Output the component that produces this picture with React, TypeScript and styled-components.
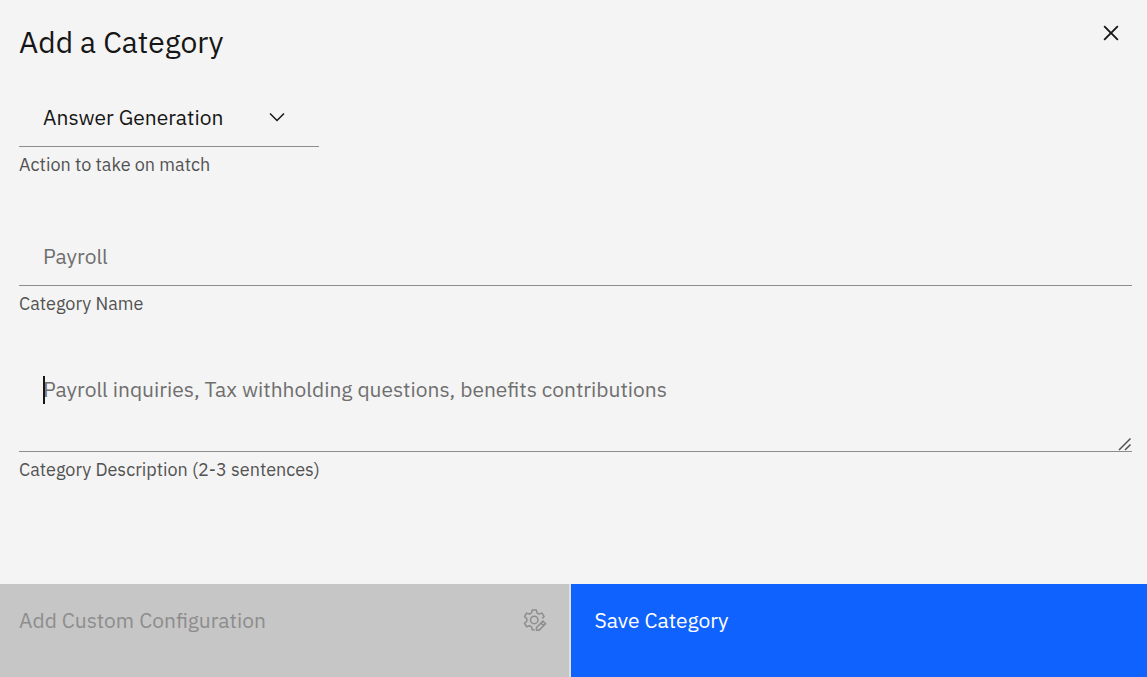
import React, { useState } from "react";
import styled, { createGlobalStyle, css } from "styled-components";

const GlobalStyle = createGlobalStyle`
  *, *::before, *::after { box-sizing: border-box; }
  body {
    margin: 0;
    background: #f4f4f4;
    color: #161616;
    font-family: "IBM Plex Sans", Roboto, "Liberation Sans", sans-serif;
  }
  button, input, select, textarea { font: inherit; color: inherit; }
`;

const Modal = styled.main`
  display: flex;
  flex-direction: column;
  min-height: 100vh;
`;

const Header = styled.header`
  display: flex;
  justify-content: space-between;
  align-items: flex-start;
  padding: 0 0 0 19px;
`;

const Title = styled.h1`
  margin: 21px 0 0;
  font-size: 30px;
  line-height: 42px;
  font-weight: 400;
`;

const CloseButton = styled.button`
  display: flex;
  align-items: center;
  justify-content: center;
  width: 72px;
  height: 66px;
  padding: 0;
  border: 0;
  background: transparent;
  cursor: pointer;
`;

const Form = styled.form`
  flex: 1;
  display: flex;
  flex-direction: column;
  gap: 43px;
  padding: 21px 15px 24px 19px;
`;

const Field = styled.div<{ $compact?: boolean }>`
  display: flex;
  flex-direction: column;
  gap: 6px;
  width: ${(p) => (p.$compact ? "300px" : "100%")};
  padding-bottom: ${(p) => (p.$compact ? "6px" : "0")};
`;

const Control = styled.div`
  position: relative;
  display: flex;
`;

const controlStyle = css`
  width: 100%;
  border: 0;
  border-bottom: 1px solid #8d8d8d;
  border-radius: 0;
  outline: 0;
  background: transparent;
  font-size: 21px;
  line-height: 28px;
  &::placeholder { color: #6f6f6f; opacity: 1; }
`;

const Select = styled.select`
  ${controlStyle}
  appearance: none;
  height: 60px;
  padding: 0 72px 0 24px;
`;

const Input = styled.input`
  ${controlStyle}
  height: 60px;
  padding: 0 24px;
`;

const TextArea = styled.textarea`
  ${controlStyle}
  display: block;
  height: 93px;
  padding: 16px 24px;
  resize: none;
`;

const Chevron = styled.svg`
  position: absolute;
  top: 18px;
  right: 30px;
  pointer-events: none;
`;

const Grip = styled.svg`
  position: absolute;
  right: 0;
  bottom: 1px;
  pointer-events: none;
`;

const Caret = styled.span`
  position: absolute;
  top: 17px;
  left: 24px;
  width: 2px;
  height: 28px;
  background: #161616;
  pointer-events: none;
`;

const Label = styled.label`
  color: #525252;
  font-size: 18px;
  line-height: 24px;
`;

const Footer = styled.footer`
  display: grid;
  grid-template-columns: calc(50% - 3px) 1fr;
`;

const FooterButton = styled.button<{ $primary?: boolean }>`
  display: flex;
  justify-content: space-between;
  align-items: center;
  padding: 22px 22px 43px ${(p) => (p.$primary ? 24 : 19)}px;
  border: 0;
  border-right: ${(p) => (p.$primary ? "0" : "2px solid #e0e0e0")};
  background: ${(p) => (p.$primary ? "#0f62fe" : "#c6c6c6")};
  color: ${(p) => (p.$primary ? "#ffffff" : "#8d8d8d")};
  font-size: 21px;
  line-height: 28px;
  text-align: left;
  cursor: ${(p) => (p.$primary ? "pointer" : "not-allowed")};
`;

export default function App() {
  const [description, setDescription] = useState("");
  const [focused, setFocused] = useState(false);

  return (
    <>
      <GlobalStyle />
      <Modal>
        <Header>
          <Title>Add a Category</Title>
          <CloseButton type="button" aria-label="Close">
            <svg width="30" height="30" viewBox="0 0 32 32" fill="#161616" aria-hidden="true">
              <path d="M24 9.4L22.6 8 16 14.6 9.4 8 8 9.4 14.6 16 8 22.6 9.4 24 16 17.4 22.6 24 24 22.6 17.4 16 24 9.4z" />
            </svg>
          </CloseButton>
        </Header>

        <Form id="category-form" onSubmit={(e) => e.preventDefault()}>
          <Field $compact>
            <Control>
              <Select id="action" defaultValue="answer">
                <option value="answer">Answer Generation</option>
              </Select>
              <Chevron width="24" height="24" viewBox="0 0 16 16" fill="#161616" aria-hidden="true">
                <path d="M8 11L3 6 3.7 5.3 8 9.6 12.3 5.3 13 6z" />
              </Chevron>
            </Control>
            <Label htmlFor="action">Action to take on match</Label>
          </Field>

          <Field>
            <Control>
              <Input id="name" type="text" placeholder="Payroll" />
            </Control>
            <Label htmlFor="name">Category Name</Label>
          </Field>

          <Field>
            <Control>
              <TextArea
                id="description"
                placeholder="Payroll inquiries, Tax withholding questions, benefits contributions"
                value={description}
                onChange={(e) => setDescription(e.target.value)}
                onFocus={() => setFocused(true)}
                onBlur={() => setFocused(false)}
              />
              {!focused && !description && <Caret />}
              <Grip width="14" height="14" viewBox="0 0 14 14" fill="none" stroke="#525252" strokeWidth="1.5" aria-hidden="true">
                <path d="M1 13L12.500 1.500M7 13L12.500 7.500" />
              </Grip>
            </Control>
            <Label htmlFor="description">Category Description (2-3 sentences)</Label>
          </Field>
        </Form>

        <Footer>
          <FooterButton type="button" disabled>
            Add Custom Configuration
            <svg width="24" height="24" viewBox="0 0 32 32" fill="none" stroke="#8d8d8d" strokeWidth="2" aria-hidden="true">
              <path d="M25.500 13.800L28.200 11.400L25.300 6.800L21.300 8.100L18.600 6.600L17.700 2.600H12.300L11.400 6.600L8.700 8.100L4.700 6.800L2 11.400L5 14.100V17.600L2 20.300L4.700 24.900L8.700 23.600L11.400 25.100L12.300 29.100H15.500" strokeLinejoin="round" />
              <circle cx="15" cy="15.900" r="5" />
              <path d="M18 29.500V26L26.500 17.500L30 21L21.500 29.500ZM24 20L27.500 23.500" />
            </svg>
          </FooterButton>
          <FooterButton type="submit" form="category-form" $primary>
            Save Category
          </FooterButton>
        </Footer>
      </Modal>
    </>
  );
}
